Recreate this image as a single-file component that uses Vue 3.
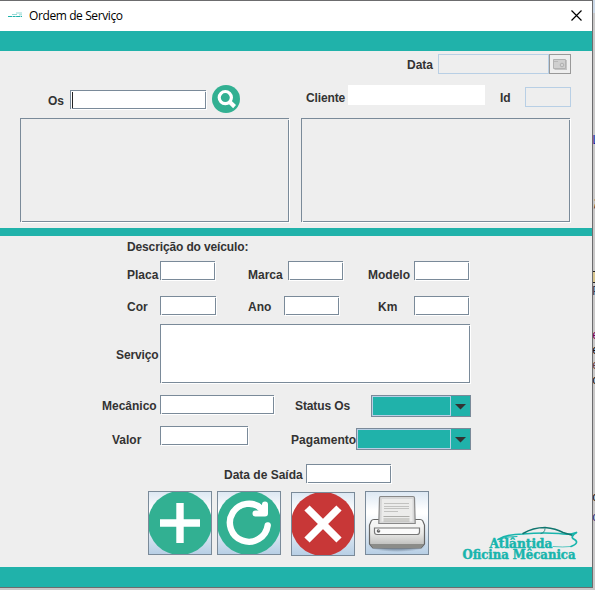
<script setup>
import { ref } from 'vue'

const os = ref('')

// Clipped glyphs of the editor that lies behind the dialog
const fragments = [
  { text: 'L', top: 134, color: '#1a1aa6' },
  { text: ';', top: 196, color: '#222' },
  { text: 'F', top: 285, color: '#333a55' },
  { text: 'e', top: 329, color: '#7f0055' },
  { text: 'e', top: 344, color: '#111' },
  { text: 'e', top: 359, color: '#6a3e3e' },
  { text: 'c', top: 374, color: '#111' },
  { text: 'c', top: 491, color: '#111' },
  { text: 'o', top: 511, color: '#2a2a80' }
]
</script>

<template>
  <div class="screen">
    <div class="window">
      <header class="titlebar">
        <svg class="app-icon" width="16" height="6" viewBox="0 0 16 6">
          <path d="M0 4.5H14" stroke="#20b2aa" stroke-width="1.2" stroke-dasharray="4 .6 3 .5" />
          <path d="M4 2.5H9M8 1H14M11 2.8H14" stroke="#20b2aa" stroke-opacity=".55" stroke-width=".9" />
        </svg>
        <span class="title">Ordem de Serviço</span>
        <svg class="close" width="11" height="11" viewBox="0 0 11 11">
          <path d="M.5 .5L10.5 10.5M10.5 .5L.5 10.5" stroke="#000" stroke-width="1.2" />
        </svg>
      </header>
      <div class="band"></div>

      <main>
        <div class="row r-date">
          <label class="l-data">Data</label>
          <div class="disabled f-data"></div>
          <div class="calendar">
            <svg width="14" height="11" viewBox="0 0 14 11">
              <path d="M1.5 1H14V11H1.5Z" fill="#c4c4c4" />
              <path d="M.5 .5H12.5V9.5H.5Z" fill="#cfcfcf" stroke="#b2b2b2" />
              <path d="M1 2.5H5" stroke="#b8b8b8" />
              <circle cx="9" cy="6" r="1.8" fill="#d4d4d4" stroke="#b0b0b0" />
            </svg>
          </div>
        </div>

        <div class="row r-os">
          <label class="l-os">Os</label>
          <div class="field f-os"><i class="caret"></i>{{ os }}</div>
          <svg class="search" width="28" height="28" viewBox="0 0 28 28">
            <circle cx="14" cy="14" r="14" fill="#32b092" />
            <circle cx="13.3" cy="12.6" r="6.1" fill="none" stroke="#fff" stroke-width="3.2" />
            <path d="M17.500 16.800L22.600 21.600" stroke="#fff" stroke-width="4.200" />
          </svg>
          <label class="l-cliente">Cliente</label>
          <div class="f-cliente"></div>
          <label class="l-id">Id</label>
          <div class="disabled f-id"></div>
        </div>

        <div class="row r-panels">
          <div class="field panel"></div>
          <div class="field panel"></div>
        </div>

        <div class="divider"></div>

        <div class="row r-desc"><label>Descrição do veículo:</label></div>

        <div class="row r-placa">
          <label class="l-placa">Placa</label>
          <div class="field"></div>
          <label class="l-marca">Marca</label>
          <div class="field"></div>
          <label class="l-modelo">Modelo</label>
          <div class="field"></div>
        </div>

        <div class="row r-cor">
          <label class="l-placa">Cor</label>
          <div class="field f-cor"></div>
          <label class="l-ano">Ano</label>
          <div class="field"></div>
          <label class="l-km">Km</label>
          <div class="field"></div>
        </div>

        <div class="row r-servico">
          <label class="l-servico">Serviço</label>
          <div class="field f-servico"></div>
        </div>

        <div class="row r-mec">
          <label class="l-mec">Mecânico</label>
          <div class="field f-mec"></div>
          <label class="l-status">Status Os</label>
          <div class="combo c-status">
            <div class="value"></div>
            <svg width="19" height="20" viewBox="0 0 19 20"><path d="M4 8H15L9.500 13.500Z" fill="#333" /></svg>
          </div>
        </div>

        <div class="row r-valor">
          <label class="l-valor">Valor</label>
          <div class="field f-valor"></div>
          <label class="l-pag">Pagamento</label>
          <div class="combo c-pag">
            <div class="value"></div>
            <svg width="19" height="20" viewBox="0 0 19 20"><path d="M4 8H15L9.500 13.500Z" fill="#333" /></svg>
          </div>
        </div>

        <div class="row r-saida">
          <label class="l-saida">Data de Saída</label>
          <div class="field f-saida"></div>
        </div>

        <div class="row r-actions">
          <div class="action">
            <svg viewBox="0 0 62 62">
              <circle cx="31" cy="31" r="32" fill="#32b092" />
              <path d="M31 11V51M11 31H51" stroke="#fff" stroke-width="7.4" />
            </svg>
          </div>
          <div class="action a-refresh">
            <svg viewBox="0 0 62 62">
              <circle cx="31" cy="31" r="32" fill="#32b092" />
              <g fill="none" stroke="#fff" stroke-linecap="round" stroke-linejoin="round">
                <path d="M49.700 33.500A19 19 0 1 1 44 17" stroke-width="6.400" />
                <path d="M47 12.500V21.500H37.500" stroke-width="6" />
                <path d="M41 15L46 20" stroke-width="6" />
              </g>
            </svg>
          </div>
          <div class="action a-delete">
            <svg viewBox="0 0 62 62">
              <circle cx="31" cy="31" r="32" fill="#c83737" />
              <path d="M15 15L47 47M47 15L15 47" stroke="#fff" stroke-width="7.400" />
            </svg>
          </div>
          <div class="action a-print">
            <svg viewBox="0 0 62 62">
              <defs>
                <linearGradient id="body" x2="0" y2="1">
                  <stop offset="0" stop-color="#fff" />
                  <stop offset=".5" stop-color="#e8e8e6" />
                  <stop offset="1" stop-color="#b4b4b2" />
                </linearGradient>
                <radialGradient id="shade">
                  <stop offset=".6" stop-color="#62758a" stop-opacity=".6" />
                  <stop offset="1" stop-color="#62758a" stop-opacity="0" />
                </radialGradient>
              </defs>
              <ellipse cx="31" cy="54" rx="29" ry="6" fill="url(#shade)" />
              <path d="M8 27.500H54Q56 27.500 56.800 29L58.500 33V52L55 56H7L3.500 52V33L5.200 29Q6 27.500 8 27.500Z" fill="url(#body)" stroke="#666" stroke-width="1.200" />
              <path d="M4.500 52H57.500L55 56H7Z" fill="#8b8c89" />
              <path d="M8 28.500H54L57 34.500H5Z" fill="#f5f5f4" />
              <path d="M14.500 4.500H47Q48.500 4.500 48.500 6L49.200 31.500H12.800L13.500 6Q13.500 4.500 14.500 4.500Z" fill="#d8d8d8" stroke="#888" stroke-width="1.200" />
              <path d="M16 7H46.500V29.500H15.500Z" fill="#ececeb" />
              <path d="M18 11.500H43M18 14.500H43M18 16.500H43M18 19.500H32" stroke="#c2c2c0" />
              <path d="M17.500 24.500H43.500M17.500 27H43.500M17.500 29H43.500" stroke="#adadaa" stroke-width="1.200" />
              <path d="M8.500 36H53.500V40Q53.500 42.500 51 42.500H11Q8.500 42.500 8.500 40Z" fill="#fbfbfb" stroke="#777" stroke-width="1.200" />
              <circle cx="12.500" cy="39" r="1.800" fill="#666" />
              <path d="M12.500 38.500L14 37.500" stroke="#eee" />
            </svg>
          </div>
          <svg class="logo" width="120" height="38" viewBox="0 0 120 38">
            <g fill="none" stroke-linecap="round">
              <path d="M37 15.500Q46 10 62 10Q80 8.500 98 9.500Q108 11.500 115.500 8.500" stroke="#18b5ad" stroke-width="1.500" />
              <path d="M62 9.500Q72 3.500 84 3.500Q95 4.500 102 8.500L112 11.500" stroke="#10766f" stroke-width="1.500" />
              <path d="M80 9.500Q84 8.500 84 5" stroke="#10766f" stroke-width=".8" />
              <path d="M115.500 8.500Q108 13 113.500 15.500Q119 19 110 22.500" stroke="#18b5ad" stroke-width="1.600" />
              <path d="M110 22.500Q102 23.500 92 22.500" stroke="#18b5ad" stroke-width=".7" />
              <path d="M37 15.500Q47 12 56 12.500" stroke="#18b5ad" />
            </g>
            <text x="28.500" y="24" textLength="63" lengthAdjust="spacingAndGlyphs">Atlântida</text>
            <text x="1.500" y="35" textLength="113" lengthAdjust="spacingAndGlyphs">Oficina Mêcanica</text>
          </svg>
        </div>
      </main>
      <div class="band"></div>
    </div>
    <aside class="behind">
      <span v-for="f in fragments" :key="f.top" :style="{ top: f.top + 'px', color: f.color }">{{ f.text }}</span>
      <b class="mark"></b>
    </aside>
  </div>
</template>

<style>
body { overflow: hidden; background: #c8c6c6; }
</style>

<style scoped>
* { box-sizing: border-box; }
.screen { display: flex; width: 595px; height: 590px; background: #c9c8c8; font-family: "Liberation Sans", Arial, sans-serif; }
.window { display: flex; flex-direction: column; width: 593px; height: 588px; border: solid #6c6c6e; border-width: 1px 1px 1px 0; background: #eee; }
.titlebar { display: flex; align-items: center; height: 30px; flex: none; padding: 0 10px 0 8px; background: #fff; }
.app-icon { margin-top: -2px; }
.title { margin-left: 5px; font: 12px/16px "Open Sans", "Noto Sans", sans-serif; color: #000; letter-spacing: -.4px; }
.close { margin-left: auto; margin-top: -1px; }
.band { flex: none; height: 20px; background: #20b2aa; }
main { flex: 1; min-height: 0; }
.row { display: flex; align-items: flex-start; }
label { flex: none; white-space: nowrap; font-size: 12px; line-height: 14px; font-weight: bold; color: #333; }
.field { position: relative; flex: none; width: 55px; height: 19px; border: 1px solid #7a8a99; background: #fff; box-shadow: 1px 1px 0 #fff; }
.field::before, .field::after { content: ""; position: absolute; width: 1px; height: 1px; background: #eee; }
.field::before { top: 0; right: -1px; }
.field::after { bottom: -1px; left: 0; }
.disabled { flex: none; height: 20px; border: 1px solid #b8cfe5; }

.r-date { height: 34px; padding: 3px 0 0 407px; }
.l-data { width: 31px; margin-top: 4px; }
.f-data { width: 111px; }
.calendar { display: flex; align-items: center; justify-content: center; width: 22px; height: 20px; border: 1px solid #999; }

.r-os { height: 33px; padding-left: 48px; }
.l-os { width: 22px; margin-top: 9px; }
.f-os { width: 136px; margin-top: 5px; }
.caret { display: block; width: 1px; height: 16px; margin: 1px 0 0 1px; background: #222; }
.search { flex: none; margin-left: 6px; }
.l-cliente { width: 42px; margin: 6px 0 0 66px; letter-spacing: -.12px; }
.f-cliente { width: 137px; height: 20px; background: #fff; }
.l-id { width: 25px; margin: 6px 0 0 15px; }
.f-id { width: 46px; margin-top: 2px; }

.r-panels { height: 110px; padding-left: 20px; gap: 12px; }
.panel { width: 269px; height: 104px; background: #eee; }
.divider { height: 8px; background: #20b2aa; }

.r-desc { height: 25px; padding: 4px 0 0 127px; letter-spacing: -.13px; }
.r-placa { height: 35px; padding-left: 127px; }
.r-placa label { margin-top: 7px; }
.l-placa { width: 33px; }
.l-marca { width: 40px; margin-left: 33px; }
.l-modelo { width: 46px; margin-left: 25px; }
.r-cor { height: 28px; padding-left: 127px; }
.r-cor label { margin-top: 4px; }
.f-cor { width: 56px; }
.l-ano { width: 36px; margin-left: 32px; }
.l-km { width: 36px; margin-left: 39px; }

.r-servico { height: 71px; padding-left: 116px; }
.l-servico { width: 44px; margin-top: 24px; letter-spacing: -.12px; }
.f-servico { width: 310px; height: 59px; }

.r-mec { height: 31px; padding-left: 102px; }
.r-mec label { margin-top: 4px; }
.l-mec { width: 58px; }
.f-mec { width: 114px; }
.l-status { width: 76px; margin-left: 21px; letter-spacing: -.1px; }
.combo { display: flex; flex: none; height: 22px; border: 1px solid #7a8a99; background: #20b2aa; }
.combo .value { flex: 1; border: 1px solid #b8cfe5; }
.combo svg { flex: none; }
.c-status { width: 100px; }

.r-valor { height: 38px; padding-left: 112px; }
.r-valor label { margin-top: 7px; }
.l-valor { width: 48px; }
.f-valor { width: 88px; }
.l-pag { width: 65px; margin-left: 43px; letter-spacing: .06px; }
.c-pag { width: 115px; margin-top: 2px; }

.r-saida { height: 27px; padding-left: 224px; }
.l-saida { width: 82px; margin-top: 4px; }
.f-saida { width: 85px; }

.r-actions { padding-left: 148px; }
.action { flex: none; width: 64px; height: 64px; border: 1px solid #7a8a99; background: linear-gradient(#dde8f3, #fff 30%, #fff 35%, #b8cfe5); }
.action svg { display: block; width: 62px; height: 62px; }
.a-refresh { margin-left: 5px; }
.a-delete { margin: 1px 0 0 10px; }
.a-print { margin-left: 10px; }
.logo { flex: none; margin: 33px 0 0 32px; }
.logo text { font: bold 12px "DejaVu Serif", serif; fill: #18b5ad; stroke: #18b5ad; stroke-width: .45px; }

.behind { position: relative; width: 2px; height: 590px; overflow: hidden; background: linear-gradient(#cbd9e8 13px, #c9c8c8 13px); }
.behind span { position: absolute; left: -1px; font: 12px/14px "Liberation Mono", monospace; }
.mark { position: absolute; top: 271px; left: -1px; width: 6px; height: 12px; border: 1px solid #222; background: #d8c690; }
</style>
